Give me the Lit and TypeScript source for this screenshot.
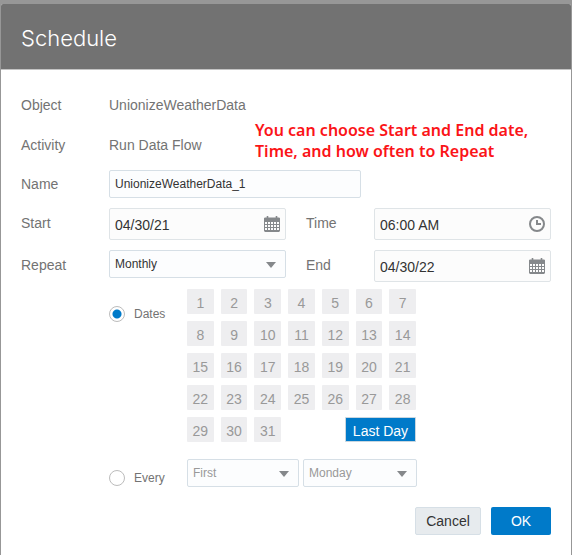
import { LitElement, html, css, svg } from "lit";
import { customElement, state } from "lit/decorators.js";
import { classMap } from "lit/directives/class-map.js";

const calendarIcon = svg`
  <svg class="icon" viewBox="0 0 16 16" aria-hidden="true">
    <path fill="#85888b" fill-rule="evenodd" d="M0 2.2L.8 1.5H2.7V0H4.3V1.5H11.7V0H13.3V1.5H15.2L16 2.2V15L15 16H1L0 15z
      M1 6v2h2V6z M4 6v2h2V6z M7 6v2h2V6z M10 6v2h2V6z M13 6v2h2V6z
      M1 9v2h2V9z M4 9v2h2V9z M7 9v2h2V9z M10 9v2h2V9z M13 9v2h2V9z
      M1 12v2h2v-2z M4 12v2h2v-2z M7 12v2h2v-2z M10 12v2h2v-2z M13 12v2h2v-2z"/>
  </svg>`;

const clockIcon = svg`
  <svg class="icon" viewBox="0 0 16 16" aria-hidden="true">
    <circle cx="8" cy="8" r="7" fill="none" stroke="#85888b" stroke-width="2"/>
    <path d="M8 4v4h4" fill="none" stroke="#85888b" stroke-width="2"/>
  </svg>`;

const arrowIcon = svg`
  <svg class="arrow" viewBox="0 0 10 6" aria-hidden="true">
    <path d="M0 0h10L5 6z" fill="#85888b"/>
  </svg>`;

@customElement("app-root")
export class AppRoot extends LitElement {
  @state() private mode = "dates";
  @state() private lastDay = true;

  static styles = css`
    :host {
      display: block;
      box-sizing: border-box;
      padding: 4px 1px 0;
      background: #979797;
      font: 14px/20px "Liberation Sans", Arial, sans-serif;
      color: #737373;
    }
    * {
      box-sizing: border-box;
    }
    .dialog {
      position: relative;
      background: #fff;
      border-radius: 2px 2px 0 0;
    }
    .header {
      display: flex;
      align-items: center;
      height: 66px;
      padding: 0 20px;
      background: #727272;
      border-bottom: 1px solid #c4c4c4;
      border-radius: 2px 2px 0 0;
    }
    h1 {
      margin: 0;
      padding-top: 2px;
      font: 300 22px/32px Inter, "Liberation Sans", sans-serif;
      color: #fff;
    }
    form {
      display: flex;
      flex-direction: column;
      padding: 25px 20px 20px;
    }
    .row {
      display: grid;
      grid-template-columns: 88px 1fr 88px 1fr;
      align-items: start;
      margin-bottom: 10px;
    }
    .row.info {
      margin-bottom: 20px;
    }
    .row.info + .row.name {
      margin-top: -5px;
    }
    .row.last {
      margin-bottom: 7px;
    }
    .label {
      line-height: 30px;
    }
    .info .label {
      line-height: 20px;
    }
    .name .label {
      line-height: 28px;
    }
    .label.second {
      padding-left: 20px;
    }
    .wide {
      grid-column: 2 / 5;
    }
    .field {
      position: relative;
      display: flex;
    }
    input[type="text"],
    select {
      width: 100%;
      height: 28px;
      margin: 0;
      padding: 0 5px;
      border: 1px solid #d6dfe6;
      border-radius: 2px;
      background: #fcfdfe;
      font: 12px/20px "Liberation Sans", Arial, sans-serif;
      color: #333;
      appearance: none;
      outline: none;
    }
    .name .field {
      width: 252px;
    }
    input.stamp[type="text"] {
      height: 32px;
      padding: 2px 30px 0 5px;
      border-color: #dfe4e7;
      background: #fcfcfc;
      font-size: 14px;
    }
    .icon {
      position: absolute;
      top: 8px;
      right: 6px;
      width: 16px;
      height: 16px;
      pointer-events: none;
    }
    .arrow {
      position: absolute;
      top: 12px;
      right: 10px;
      width: 10px;
      height: 6px;
      pointer-events: none;
    }
    select:disabled {
      opacity: 1;
      color: #999;
    }
    .choice {
      display: grid;
      grid-template-columns: 78px 1fr;
      padding-left: 88px;
    }
    .choice.dates {
      margin-bottom: 17px;
    }
    .option {
      display: flex;
      align-items: center;
      align-self: start;
      gap: 9px;
      height: 18px;
      margin-top: 16px;
      font-size: 12px;
    }
    .every .option {
      margin-top: 10px;
    }
    input[type="radio"] {
      flex: none;
      width: 16px;
      height: 16px;
      margin: 0;
      border: 1px solid #bcbcbc;
      border-radius: 50%;
      background: #fff;
      appearance: none;
    }
    input[type="radio"]:checked {
      background: radial-gradient(circle, #007ac9 4px, #fff 5px);
    }
    .days {
      display: grid;
      grid-template-columns: repeat(7, 1fr);
      gap: 7px;
      width: 229px;
    }
    button {
      margin: 0;
      padding: 0;
      border: 0;
      border-radius: 2px;
      font: 14px/20px "Liberation Sans", Arial, sans-serif;
    }
    .day {
      height: 25px;
      padding-top: 2px;
      border-radius: 1px;
      background: #eeeef0;
      color: #999;
    }
    .day.month-end {
      grid-column: 4 / 8;
      justify-self: end;
      width: 71px;
    }
    .day.on {
      border: 1px solid #c9d6df;
      background: #007ac9;
      color: #fff;
    }
    .picks {
      display: grid;
      grid-template-columns: 112px 114px;
      gap: 4px;
    }
    .footer {
      display: flex;
      justify-content: flex-end;
      gap: 10px;
      margin-top: 20px;
    }
    .action {
      width: 60px;
      height: 28px;
      background: #007ac9;
      color: #fff;
    }
    .action.cancel {
      width: 66px;
      border: 1px solid #d6dfe6;
      background: #e7ebee;
      color: #333;
    }
    .note {
      position: absolute;
      top: 116px;
      left: 254px;
      width: 290px;
      margin: 0;
      font: 600 16px/21px "Noto Sans", sans-serif;
      color: #fb1418;
    }
  `;

  private dateField(id: string, value: string, icon: unknown) {
    return html`<div class="field">
      <input class="stamp" type="text" id=${id} .value=${value} />${icon}
    </div>`;
  }

  render() {
    const days = Array.from({ length: 31 }, (_, i) => i + 1);
    const byDate = this.mode === "dates";
    return html`
      <section class="dialog" role="dialog" aria-labelledby="title">
        <header class="header"><h1 id="title">Schedule</h1></header>
        <form @submit=${(e: Event) => e.preventDefault()}>
          <div class="row info">
            <span class="label">Object</span>
            <span class="wide">UnionizeWeatherData</span>
          </div>
          <div class="row info">
            <span class="label">Activity</span>
            <span class="wide">Run Data Flow</span>
          </div>
          <div class="row name">
            <label class="label" for="name">Name</label>
            <div class="field wide">
              <input type="text" id="name" .value=${"UnionizeWeatherData_1"} />
            </div>
          </div>
          <div class="row">
            <label class="label" for="start">Start</label>
            ${this.dateField("start", "04/30/21", calendarIcon)}
            <label class="label second" for="time">Time</label>
            ${this.dateField("time", "06:00 AM", clockIcon)}
          </div>
          <div class="row last">
            <label class="label" for="repeat">Repeat</label>
            <div class="field">
              <select id="repeat">
                <option>Monthly</option>
              </select>
              ${arrowIcon}
            </div>
            <label class="label second" for="end">End</label>
            ${this.dateField("end", "04/30/22", calendarIcon)}
          </div>
          <div class="choice dates">
            <label class="option">
              <input type="radio" name="mode" .checked=${byDate}
                @change=${() => (this.mode = "dates")} />Dates
            </label>
            <div class="days">
              ${days.map((d) => html`<button type="button" class="day">${d}</button>`)}
              <button type="button"
                class=${classMap({ day: true, "month-end": true, on: this.lastDay })}
                @click=${() => (this.lastDay = !this.lastDay)}>Last Day</button>
            </div>
          </div>
          <div class="choice every">
            <label class="option">
              <input type="radio" name="mode" .checked=${!byDate}
                @change=${() => (this.mode = "every")} />Every
            </label>
            <div class="picks">
              <div class="field">
                <select aria-label="Week" ?disabled=${byDate}>
                  <option>First</option>
                </select>
                ${arrowIcon}
              </div>
              <div class="field">
                <select aria-label="Weekday" ?disabled=${byDate}>
                  <option>Monday</option>
                </select>
                ${arrowIcon}
              </div>
            </div>
          </div>
          <div class="footer">
            <button type="button" class="action cancel">Cancel</button>
            <button type="submit" class="action">OK</button>
          </div>
        </form>
        <p class="note">You can choose Start and End date,<br />Time, and how often to Repeat</p>
      </section>
    `;
  }
}
